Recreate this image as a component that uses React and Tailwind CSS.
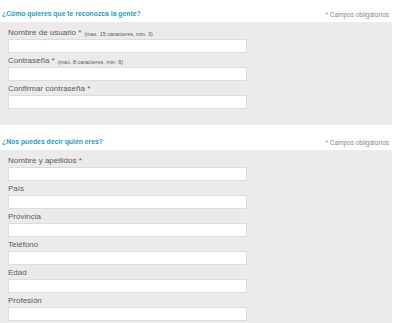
import React from "react";

const font = { fontFamily: '"Liberation Sans", Arial, sans-serif' };

function Field({ label, hint }) {
  return (
    <div className="flex flex-col">
      <div className="h-[14px] flex items-end pb-[2px] text-[8px] leading-none text-[#5a5a5a]">
        <span>{label}</span>
        {hint && <span className="ml-[3px] text-[5.5px] leading-none">{hint}</span>}
      </div>
      <input
        type="text"
        className="block w-[239px] h-[14px] p-0 bg-white border border-[#dcdcdc] outline-none"
      />
    </div>
  );
}

function Section({ title, fields }) {
  return (
    <section className="flex flex-col">
      <div className="h-[22px] flex items-end justify-between pb-[4px] pl-[2px] pr-[11px]">
        <h2 className="text-[6.8px] leading-none font-bold text-[#2a9cc0]">{title}</h2>
        <span className="text-[6.5px] leading-none text-[#888]">* Campos obligatorios</span>
      </div>
      <div className="w-[392px] bg-[#ebebeb] pl-[8px] pt-[3px] pb-[16px] flex flex-col">
        {fields.map((f) => (
          <Field key={f.label} label={f.label} hint={f.hint} />
        ))}
      </div>
    </section>
  );
}

export default function App() {
  return (
    <div className="w-[400px] h-[323px] overflow-hidden bg-white flex flex-col gap-[3px]" style={font}>
      <Section
        title="¿Cómo quieres que te reconozca la gente?"
        fields={[
          { label: "Nombre de usuario *", hint: "(max. 15 caracteres, min. 3)" },
          { label: "Contraseña *", hint: "(max. 8 caracteres, min. 6)" },
          { label: "Confirmar contraseña *" },
        ]}
      />
      <Section
        title="¿Nos puedes decir quién eres?"
        fields={[
          { label: "Nombre y apellidos *" },
          { label: "País" },
          { label: "Provincia" },
          { label: "Teléfono" },
          { label: "Edad" },
          { label: "Profesión" },
        ]}
      />
    </div>
  );
}
